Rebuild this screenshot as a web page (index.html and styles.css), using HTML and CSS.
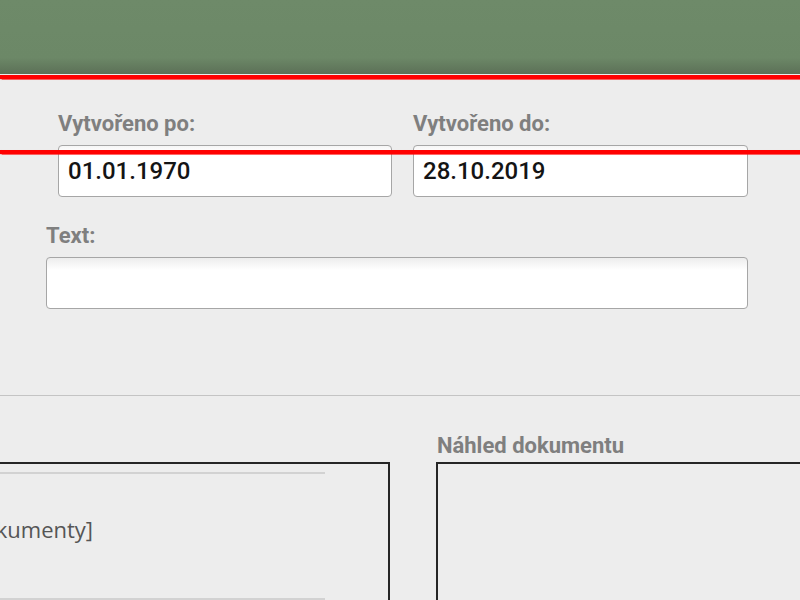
FILE: index.html
```html
<!DOCTYPE html>
<html lang="cs">
<head>
<meta charset="utf-8">
<title>Dokumenty</title>
<link rel="stylesheet" href="styles.css">
</head>
<body>
<header class="topbar"></header>
<main class="page">
  <section class="filters">
    <div class="date-row">
      <div class="field">
        <label class="label" for="from">Vytvořeno po:</label>
        <input class="input input-date" id="from" type="text" value="01.01.1970">
      </div>
      <div class="field">
        <label class="label" for="to">Vytvořeno do:</label>
        <input class="input input-date" id="to" type="text" value="28.10.2019">
      </div>
    </div>
    <div class="field field-text">
      <label class="label" for="text">Text:</label>
      <input class="input" id="text" type="text" value="">
    </div>
  </section>
  <section class="results">
    <div class="col col-list">
      <div class="label-spacer"></div>
      <div class="box">
        <div class="list">
          <div class="list-empty">[Žádné dokumenty]</div>
        </div>
      </div>
    </div>
    <div class="col col-preview">
      <div class="label">Náhled dokumentu</div>
      <div class="box"></div>
    </div>
  </section>
</main>
<div class="guide guide-1"></div>
<div class="guide guide-2"></div>
</body>
</html>
```
FILE: styles.css
```css
html, body {
  margin: 0;
  padding: 0;
}
body {
  width: 800px;
  height: 600px;
  overflow: hidden;
  background: #ededed;
  font-family: Roboto, "Liberation Sans", sans-serif;
  position: relative;
}
.topbar {
  height: 74px;
  background: linear-gradient(to bottom, #6e8a69 0, #6c8867 78%, #5c7057 100%);
}
.page {
  display: block;
}
.filters {
  padding: 37px 52px 86px 46px;
  border-bottom: 1px solid #c4c4c4;
}
.date-row {
  display: grid;
  grid-template-columns: 334px 335px;
  column-gap: 21px;
  padding-left: 12px;
}
.field {
  display: flex;
  flex-direction: column;
}
.field-text {
  margin-top: 26px;
}
.label {
  font-family: Roboto, "Liberation Sans", sans-serif;
  font-weight: 700;
  font-size: 22px;
  line-height: 26px;
  color: #7f7f7f;
  margin-bottom: 8px;
  white-space: nowrap;
}
.input {
  box-sizing: border-box;
  height: 52px;
  width: 100%;
  margin: 0;
  border: 1px solid #a6a6a6;
  border-radius: 4px;
  background: linear-gradient(to bottom, #ededed 0, #ffffff 12px, #ffffff 100%);
  padding: 0 9px;
  font-family: Roboto, "Liberation Sans", sans-serif;
  font-weight: 500;
  font-size: 24px;
  color: #141414;
  outline: none;
}
.input-date {
  background: linear-gradient(to bottom, #f6f6f6 0, #ffffff 6px, #ffffff 100%);
}
.results {
  display: flex;
  gap: 46px;
  margin-left: -160px;
  padding-top: 37px;
}
.col {
  display: flex;
  flex-direction: column;
}
.col-list {
  width: 550px;
  flex: 0 0 550px;
}
.col-preview {
  width: 420px;
  flex: 0 0 420px;
}
.col-preview .label {
  margin-bottom: 3px;
  padding-left: 1px;
}
.label-spacer {
  height: 29px;
}
.box {
  height: 300px;
  border: 2px solid #262626;
  box-sizing: border-box;
}
.list {
  margin-top: 8px;
  margin-right: 63px;
  border-top: 2px solid #d2d2d2;
  border-bottom: 2px solid #d2d2d2;
}
.list-empty {
  padding: 40px 0 54px 50px;
  font-family: "Open Sans", "Noto Sans", sans-serif;
  font-size: 22px;
  line-height: 30px;
  color: #555555;
  white-space: nowrap;
}
.guide {
  position: absolute;
  left: 0;
  right: 0;
  height: 4px;
  background: #ff0000;
  box-shadow: 0 0 1px 0.5px rgba(255, 0, 0, 0.6);
}
.guide-1 {
  top: 75px;
}
.guide-2 {
  top: 150px;
}
```
